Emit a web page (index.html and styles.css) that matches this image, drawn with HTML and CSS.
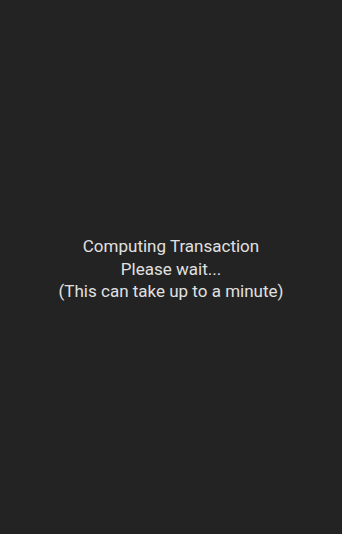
FILE: index.html
```html
<!DOCTYPE html>
<html lang="en">
<head>
    <meta charset="UTF-8">
    <meta name="viewport" content="width=device-width, initial-scale=1.0">
    <title>Computing Transaction</title>
    <link rel="stylesheet" href="styles.css">
</head>
<body>
    <div class="loading-screen">
        <div class="loading-text">
            <p>Computing Transaction</p>
            <p>Please wait...</p>
            <p>(This can take up to a minute)</p>
        </div>
    </div>
</body>
</html>
```

FILE: styles.css
```css
body {
    margin: 0;
    font-family: Roboto, "Noto Sans", Arial, sans-serif;
    background-color: #232323;
    color: #e0e0e0;
}

.loading-screen {
    height: 100vh;
    display: flex;
    align-items: center;
    justify-content: center;
}

.loading-text {
    text-align: center;
    font-size: 17px;
    line-height: 22.5px;
    padding-top: 4px;
}

.loading-text p {
    margin: 0;
}
```
